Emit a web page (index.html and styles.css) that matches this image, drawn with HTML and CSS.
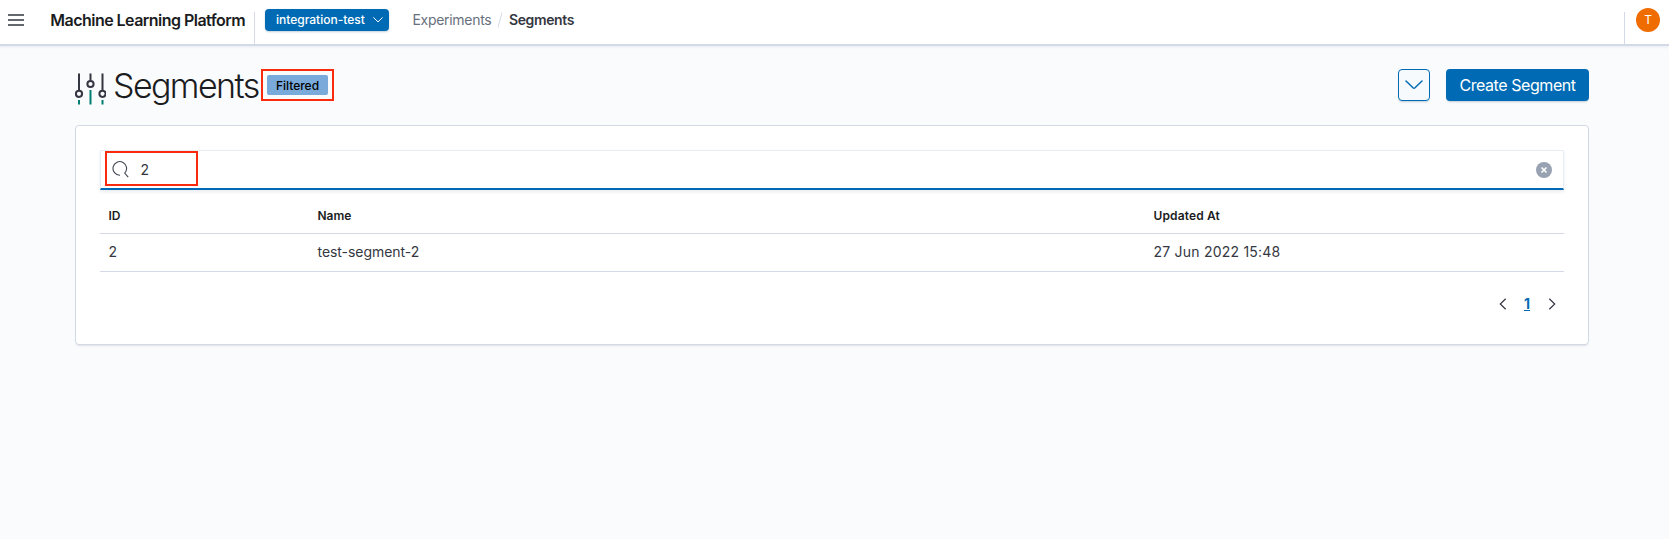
FILE: index.html
```html
<!DOCTYPE html>
<html lang="en">
<head>
<meta charset="utf-8">
<title>Segments</title>
<link rel="stylesheet" href="styles.css">
</head>
<body>
<header class="topbar">
  <svg class="menu-icon" width="16" height="12" viewBox="0 0 16 12"><path d="M0 .9h16M0 6h16M0 11.1h16" stroke="#343741" stroke-width="1.5"/></svg>
  <div class="brand"><span class="brand-name">Machine Learning Platform</span></div>
  <button class="project"><span class="project-name">integration-test</span><svg width="10" height="6" viewBox="0 0 10 6"><path d="M.7.7 5 4.9 9.3.7" fill="none" stroke="#fff" stroke-linecap="round"/></svg></button>
  <nav class="crumbs"><span class="crumb">Experiments</span><svg class="slash" width="6" height="16" viewBox="0 0 6 16"><path d="M5 .5 1 15.5" stroke="#d3dae6"/></svg><span class="current">Segments</span></nav>
  <div class="user"><span class="avatar">T</span></div>
</header>
<main class="page">
  <div class="page-header">
    <svg class="page-icon" width="31" height="32" viewBox="0 0 31 32" fill="none" stroke-width="2"><g stroke="#343741"><path d="M4 .5V17M15.500 .5V7.500M27.500 .5V17"/><circle cx="4" cy="20.800" r="3.100"/><circle cx="15.500" cy="11" r="3.100"/><circle cx="27.500" cy="20.800" r="3.100"/></g><path d="M4 27v4.500M15.500 17v14.500M27.500 27v4.500" stroke="#017d73"/></svg>
    <h1 class="title">Segments</h1>
    <div class="badge-frame"><span class="badge">Filtered</span></div>
    <button class="toggle"><svg width="18" height="10" viewBox="0 0 18 10"><path d="m1 1 7 6.800q1 .9 2 0L17 1" fill="none" stroke="#006bb4" stroke-width="1.500" stroke-linecap="round"/></svg></button>
    <button class="create"><span class="create-label">Create Segment</span></button>
  </div>
  <section class="panel">
    <div class="search">
      <div class="search-frame"><svg class="search-icon" width="17" height="17" viewBox="0 0 17 17"><path d="M8 14.200A6.800 6.800 0 1 1 12.700 12.100l3.500 4" fill="none" stroke="#404552" stroke-width="1.100"/></svg><span class="query">2</span></div>
      <svg class="clear" width="16" height="16" viewBox="0 0 16 16"><circle cx="8" cy="8" r="8" fill="#98a2b3"/><path d="m5.500 5.500 5 5m0-5-5 5" stroke="#fff" stroke-width="1.600"/></svg>
    </div>
    <div class="row head"><span>ID</span><span>Name</span><span class="h-date">Updated At</span></div>
    <div class="row"><span>2</span><span class="c-name">test-segment-2</span><span class="c-date">27 Jun 2022 15:48</span></div>
    <div class="pager">
      <svg width="8" height="12" viewBox="0 0 8 12"><path d="M6.700.7 1.300 6l5.400 5.300" fill="none" stroke="#343741" stroke-width="1.200"/></svg>
      <span class="page-number">1</span>
      <svg width="8" height="12" viewBox="0 0 8 12"><path d="M1.300.7 6.700 6l-5.400 5.300" fill="none" stroke="#343741" stroke-width="1.200"/></svg>
    </div>
  </section>
</main>
</body>
</html>
```
FILE: styles.css
```css
* { box-sizing: border-box; }
body { margin: 0; min-height: 539px; background: #fafbfd; color: #343741; font-family: Inter, "Liberation Sans", sans-serif; font-size: 14px; line-height: 20px; }
svg { display: block; flex: none; }
button { border: 0; padding: 0; font: inherit; display: flex; align-items: center; }
span, h1 { white-space: nowrap; }
.topbar { display: flex; align-items: flex-start; height: 46px; background: #fff; border-bottom: 2px solid #d3dae6; box-shadow: 0 1px 3px rgba(152, 162, 179, .2); }
.menu-icon { margin: 14px 0 0 8px; }
.brand { width: 205px; height: 32px; margin: 12px 0 0 26px; border-right: 1px solid #d3dae6; line-height: 17px; }
.brand-name { display: block; margin-left: .3px; color: #1a1c21; font-size: 16px; font-weight: 600; letter-spacing: -.53px; }
.project { width: 123.5px; height: 22px; margin: 9px 0 0 10px; padding: 0 6px 0 11px; justify-content: space-between; border-radius: 4px; background: #006bb4; color: #fff; font-size: 12px; font-weight: 500; box-shadow: 0 1px 2px rgba(54, 97, 126, .3); }
.crumbs { display: flex; align-items: center; height: 20px; margin: 10px 0 0 24px; }
.crumb { color: #69707d; letter-spacing: -.3px; }
.slash { margin: 0 5.5px 0 6px; }
.current { font-weight: 600; letter-spacing: -.37px; }
.user { margin: 12px 9px 0 auto; width: 36px; height: 32px; border-left: 1px solid #d3dae6; }
.avatar { display: flex; align-items: center; justify-content: center; width: 24px; height: 24px; margin: -4px 0 0 11px; border-radius: 50%; background: #ef6c00; color: #fff; font-size: 12px; }
.page { width: 1514px; margin: 23px 0 0 75px; }
.page-header { display: flex; align-items: center; height: 32px; }
.page-icon { margin: 8px 0 0; }
.title { width: 147px; margin: 2px 0 0 7px; color: #1a1c21; font-size: 34px; line-height: 40px; font-weight: 350; letter-spacing: -1.6px; }
.badge-frame { width: 73px; height: 32px; margin-left: 1px; padding: 4px; border: 2px solid #fa2a0c; }
.badge { display: flex; align-items: center; justify-content: center; width: 61px; height: 20px; background: #79aad9; border-radius: 2px; color: #000; font-size: 12px; font-weight: 500; line-height: 21px; }
.toggle { width: 32px; height: 32px; margin-left: auto; justify-content: center; border: 1px solid #006bb4; border-radius: 4px; background: #f6fafd; box-shadow: 0 2px 2px -1px rgba(54, 97, 126, .3); }
.create { width: 143px; height: 32px; margin-left: 16px; justify-content: center; border-radius: 4px; background: #006bb4; color: #fff; font-size: 16px; letter-spacing: -.43px; box-shadow: 0 2px 2px -1px rgba(54, 97, 126, .3); }
.panel { height: 220px; margin-top: 24px; padding: 24px; border: 1px solid #d3dae6; border-radius: 4px; background: #fff; box-shadow: 0 2px 2px -1px rgba(152, 162, 179, .3); }
.search { display: flex; align-items: center; justify-content: space-between; height: 40px; padding: 0 11px 2px 4px; border: 1px solid #e9edf4; border-bottom: 2px solid #006bb4; box-shadow: 0 2px 3px rgba(152, 162, 179, .2); }
.search-frame { display: flex; align-items: center; width: 93px; height: 35px; padding: 2px 0 0 4.5px; border: 2px solid #fa2a0c; }
.query { margin-left: 12px; }
.clear { margin-top: 2px; }
.row { display: grid; grid-template-columns: 209px 836px 1fr; align-items: center; height: 38px; padding: 0 0 1px 8.5px; border-bottom: 1px solid #d3dae6; }
.head { height: 44px; padding-top: 9px; color: #1a1c21; font-size: 12px; font-weight: 600; }
.h-date { letter-spacing: .13px; }
.c-name { letter-spacing: -.05px; }
.c-date { letter-spacing: .22px; }
.pager { display: flex; align-items: center; height: 20px; margin: 22px 8px 0 auto; width: 57px; justify-content: space-between; }
.page-number { margin-right: 1px; color: #006bb4; font-weight: 700; text-decoration: underline; }
```
